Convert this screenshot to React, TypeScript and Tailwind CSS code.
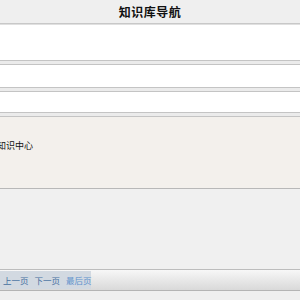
import React from "react";

const Sep = () => (
  <div className="h-[5px] border-t border-b border-t-[#c4c4c4] border-b-[#c4c4c4] bg-[#ebebeb]" />
);

export default function App() {
  return (
    <div
      className="w-[300px] h-[300px] overflow-hidden bg-[#efefef] flex flex-col"
      style={{ fontFamily: '"Noto Sans CJK SC", "Noto Sans", sans-serif' }}
    >
      <div className="h-[23px] bg-[#efefef] flex items-center justify-center text-[12px] font-bold text-[#111] tracking-[0.5px]">
        知识库导航
      </div>
      <div className="h-[2px] bg-[#c8c8c8] border-b border-[#e0e0e0]" />
      <div className="h-[35px] bg-white" />
      <Sep />
      <div className="h-[22px] bg-white" />
      <Sep />
      <div className="h-[20px] bg-white" />
      <Sep />
      <div className="h-[71px] bg-[#f3f0ec] flex items-start pt-[23px]">
        <span className="ml-[-3px] whitespace-nowrap text-[9px] leading-[12px] text-[#111]">知识中心</span>
      </div>
      <div className="h-[1px] bg-[#b8b8b8]" />
      <div className="h-[80px] bg-[#f0f0f0]" />
      <div className="h-[1px] bg-[#bdbdbd]" />
      <div className="h-[20px] bg-gradient-to-b from-[#f7f7f7] to-[#d9d9d9] flex items-center">
        <div className="h-[18px] w-[91px] bg-[#d2d9e1] flex items-center gap-[6px] pl-[3px] text-[8.5px] whitespace-nowrap">
          <span className="text-[#46709f]">上一页</span>
          <span className="text-[#46709f]">下一页</span>
          <span className="text-[#5f92cc]">最后页</span>
        </div>
      </div>
      <div className="h-[1px] bg-[#b4b4b4]" />
      <div className="flex-1 bg-[#efefef]" />
    </div>
  );
}
